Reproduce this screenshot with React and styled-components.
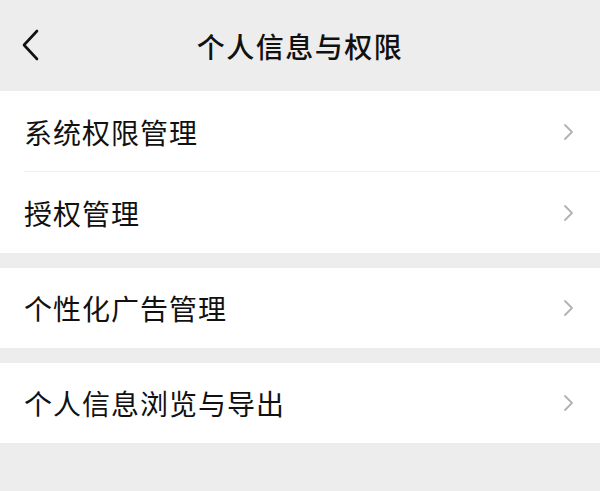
import React from "react";
import styled, { createGlobalStyle } from "styled-components";

const Global = createGlobalStyle`
body {
  margin: 0;
  background: #ededed;
  font-family: "Noto Sans CJK SC", "Noto Sans", sans-serif;
}
`

const Page = styled.div`
width: 600px;
height: 491px;
background: #ededed;
overflow: hidden;
`

const Header = styled.div`
height: 91px;
display: flex;
align-items: center;
justify-content: center;
position: relative;
>h1{
  margin: 0;
  font-size: 28px;
  font-weight: 500;
  color: #111;
  letter-spacing: 1.5px;
}
`

const Back = styled.svg`
position: absolute;
left: 20px;
top: 29px;
`

const Group = styled.div`
background: #fff;
margin-bottom: 15px;
`

const Row = styled.div`
height: ${p => p.h}px;
display: flex;
align-items: center;
justify-content: space-between;
padding: 0 24px;
position: relative;
>span{
  font-size: 28px;
  color: #111;
  letter-spacing: 1px;
}
${p => p.divided && `
  &::after{
    content: "";
    position: absolute;
    left: 24px;
    right: 0;
    bottom: 0;
    height: 1px;
    background: #efefef;
  }
`}
`

const Chevron = () => (
  <svg width="14" height="20" viewBox="0 0 14 20">
    <path d="M3 3 L10 10 L3 17" fill="none" stroke="#b2b2b2" strokeWidth="1.8" strokeLinecap="round" strokeLinejoin="round" />
  </svg>
)

const groups = [
  { h: 81, items: ["系统权限管理", "授权管理"] },
  { h: 80, items: ["个性化广告管理"] },
  { h: 80, items: ["个人信息浏览与导出"] },
]

export default function App() {
  return (
    <Page>
      <Global />
      <Header>
        <Back width="22" height="32" viewBox="0 0 22 32">
          <path d="M17 2 L4 16 L17 30" fill="none" stroke="#111" strokeWidth="2.6" strokeLinecap="round" strokeLinejoin="round" />
        </Back>
        <h1>个人信息与权限</h1>
      </Header>
      {groups.map((g, i) => (
        <Group key={i}>
          {g.items.map((t, j) => (
            <Row key={t} h={g.h} divided={j < g.items.length - 1}>
              <span>{t}</span>
              <Chevron />
            </Row>
          ))}
        </Group>
      ))}
    </Page>
  )
}
